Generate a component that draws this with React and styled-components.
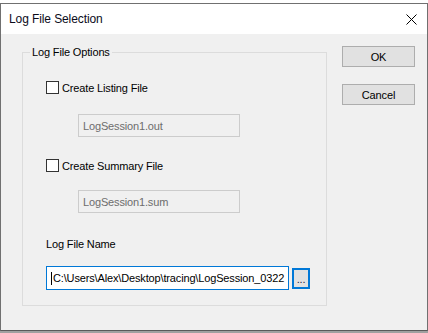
import styled, { createGlobalStyle } from "styled-components";

const Global = createGlobalStyle`
  html, body {
    margin: 0;
    padding: 0;
    background: #ffffff;
  }
  body {
    font-family: "Liberation Sans", Arial, sans-serif;
    font-size: 11px;
    letter-spacing: -0.15px;
    color: #000;
  }
`;

const Page = styled.div`
  width: 428px;
  height: 333px;
  padding-top: 3px;
  box-sizing: border-box;
  background: linear-gradient(to bottom, #ffffff 0, #ffffff 330px, #a0a0a0 330px);
`;

const Window = styled.div`
  width: 428px;
  height: 328px;
  box-sizing: border-box;
  border: 1px solid #707070;
  border-bottom-color: #5a5a5a;
  background: #f0f0f0;
  display: flex;
  flex-direction: column;
`;

const TitleBar = styled.div`
  height: 30px;
  background: #ffffff;
  display: flex;
  align-items: center;
  justify-content: space-between;
  padding: 0 10px 0 8px;
  font-size: 12px;
  letter-spacing: -0.1px;
  color: #0b0b1a;
`;

const CloseIcon = styled.svg`
  width: 11px;
  height: 11px;
`;

const Body = styled.div`
  flex: 1;
  display: flex;
  padding: 18px 0 0 21px;
`;

const GroupBox = styled.div`
  width: 305px;
  height: 254px;
  box-sizing: border-box;
  border: 1px solid #dcdcdc;
  padding: 0 0 0 23px;
  display: flex;
  flex-direction: column;
`;

const Legend = styled.div`
  align-self: flex-start;
  margin: -7px 0 0 -16px;
  padding: 0 2px 0 2px;
  background: #f0f0f0;
  line-height: 13px;
`;

const CheckRow = styled.label`
  display: flex;
  align-items: center;
  gap: 3px;
  margin-top: ${(p) => p.$top}px;
  height: 13px;
`;

const CheckBox = styled.span`
  width: 13px;
  height: 13px;
  box-sizing: border-box;
  border: 1px solid #333333;
  background: #ffffff;
`;

const DisabledField = styled.div`
  width: 162px;
  height: 23px;
  box-sizing: border-box;
  margin: ${(p) => p.$top}px 0 0 32px;
  border: 1px solid #cccccc;
  background: #f0f0f0;
  color: #6d6d6d;
  display: flex;
  align-items: center;
  padding-left: 4px;
`;

const FieldLabel = styled.div`
  margin-top: 25px;
  line-height: 13px;
`;

const PathRow = styled.div`
  display: flex;
  align-items: center;
  gap: 3px;
  margin-top: 15px;
`;

const PathInput = styled.div`
  width: 243px;
  height: 24px;
  box-sizing: border-box;
  border: 1px solid #0078d7;
  background: #ffffff;
  display: flex;
  align-items: center;
  padding-left: 4px;
  overflow: hidden;
  white-space: nowrap;
`;

const Caret = styled.span`
  width: 1px;
  height: 13px;
  background: #000;
  margin-right: 1px;
`;

const BrowseButton = styled.div`
  width: 18px;
  height: 21px;
  box-sizing: border-box;
  border: 2px solid #0078d7;
  background: #e1e1e1;
  display: flex;
  align-items: flex-end;
  justify-content: center;
  padding-bottom: 3px;
  line-height: 10px;
  color: #1a1a40;
`;

const ButtonColumn = styled.div`
  display: flex;
  flex-direction: column;
  gap: 17px;
  margin: -6px 0 0 15px;
`;

const Button = styled.div`
  width: 73px;
  height: 21px;
  box-sizing: border-box;
  border: 1px solid #adadad;
  background: #e1e1e1;
  display: flex;
  align-items: center;
  justify-content: center;
`;

export default function App() {
  return (
    <>
      <Global />
      <Page>
        <Window>
          <TitleBar>
            <span>Log File Selection</span>
            <CloseIcon viewBox="0 0 11 11">
              <path d="M0.5 0.5 L10.5 10.5 M10.5 0.5 L0.5 10.5" stroke="#000" strokeWidth="1" fill="none" />
            </CloseIcon>
          </TitleBar>
          <Body>
            <GroupBox>
              <Legend>Log File Options</Legend>
              <CheckRow $top={22}>
                <CheckBox />
                Create Listing File
              </CheckRow>
              <DisabledField $top={20}>LogSession1.out</DisabledField>
              <CheckRow $top={22}>
                <CheckBox />
                Create Summary File
              </CheckRow>
              <DisabledField $top={18}>LogSession1.sum</DisabledField>
              <FieldLabel>Log File Name</FieldLabel>
              <PathRow>
                <PathInput>
                  <Caret />
                  C:\Users\Alex\Desktop\tracing\LogSession_0322
                </PathInput>
                <BrowseButton>...</BrowseButton>
              </PathRow>
            </GroupBox>
            <ButtonColumn>
              <Button>OK</Button>
              <Button>Cancel</Button>
            </ButtonColumn>
          </Body>
        </Window>
      </Page>
    </>
  );
}
